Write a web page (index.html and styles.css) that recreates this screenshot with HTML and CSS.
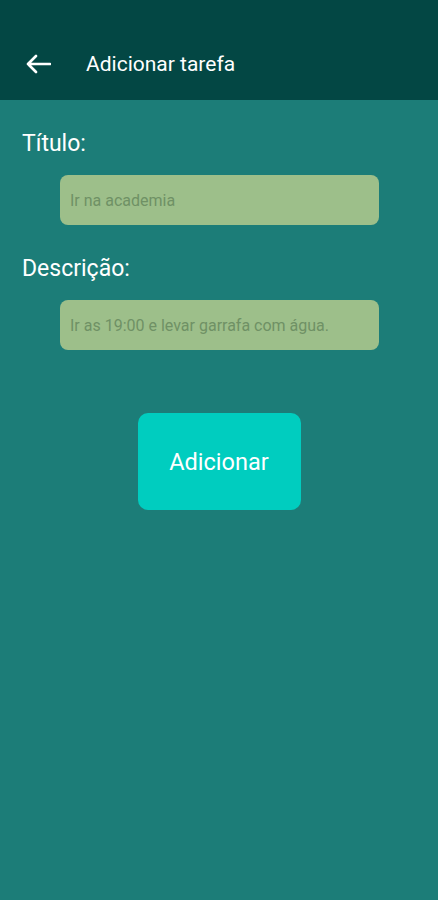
FILE: index.html
```html
<!DOCTYPE html>
<html lang="pt">
<head>
<meta charset="utf-8">
<link rel="stylesheet" href="styles.css">
</head>
<body>
<div class="screen">
  <header class="appbar">
    <svg class="back" width="26" height="20" viewBox="0 0 26 20">
      <path d="M25 10H3M11 2L3 10l8 8" fill="none" stroke="#fff" stroke-width="2.6" stroke-linecap="round" stroke-linejoin="round"/>
    </svg>
    <span class="appbar-title">Adicionar tarefa</span>
  </header>
  <main class="content">
    <label class="label">Título:</label>
    <div class="field"><span class="placeholder">Ir na academia</span></div>
    <label class="label label-2">Descrição:</label>
    <div class="field"><span class="placeholder">Ir as 19:00 e levar garrafa com água.</span></div>
    <div class="actions">
      <button class="btn">Adicionar</button>
    </div>
  </main>
</div>
</body>
</html>
```
FILE: styles.css
```css
html, body {
  margin: 0;
  padding: 0;
  height: 100%;
}
body {
  background: #1c7d78;
  font-family: Roboto, "Liberation Sans", sans-serif;
}
.screen {
  min-height: 900px;
  display: flex;
  flex-direction: column;
}
.appbar {
  height: 100px;
  background: #034744;
  display: flex;
  align-items: center;
  padding: 28px 0 0 25px;
  box-sizing: border-box;
  gap: 35px;
}
.back {
  display: block;
}
.appbar-title {
  color: #fff;
  font-size: 21px;
  line-height: 24px;
}
.content {
  display: flex;
  flex-direction: column;
  padding: 31px 0 0 22px;
}
.label {
  color: #fff;
  font-size: 23px;
  line-height: 26px;
  height: 26px;
}
.label-2 {
  margin-top: 31px;
}
.field {
  margin: 18px 0 0 38px;
  width: 319px;
  height: 50px;
  background: #9dbf8a;
  border-radius: 8px;
  display: flex;
  align-items: center;
  padding-left: 10px;
  box-sizing: border-box;
}
.placeholder {
  color: #6f9165;
  font-size: 16px;
}
.actions {
  display: flex;
  justify-content: center;
  margin-top: 63px;
  padding-right: 22px;
}
.btn {
  width: 163px;
  height: 97px;
  border: none;
  border-radius: 10px;
  background: #00cdbf;
  color: #fff;
  font-family: Roboto, "Liberation Sans", sans-serif;
  font-size: 23.5px;
}
```
